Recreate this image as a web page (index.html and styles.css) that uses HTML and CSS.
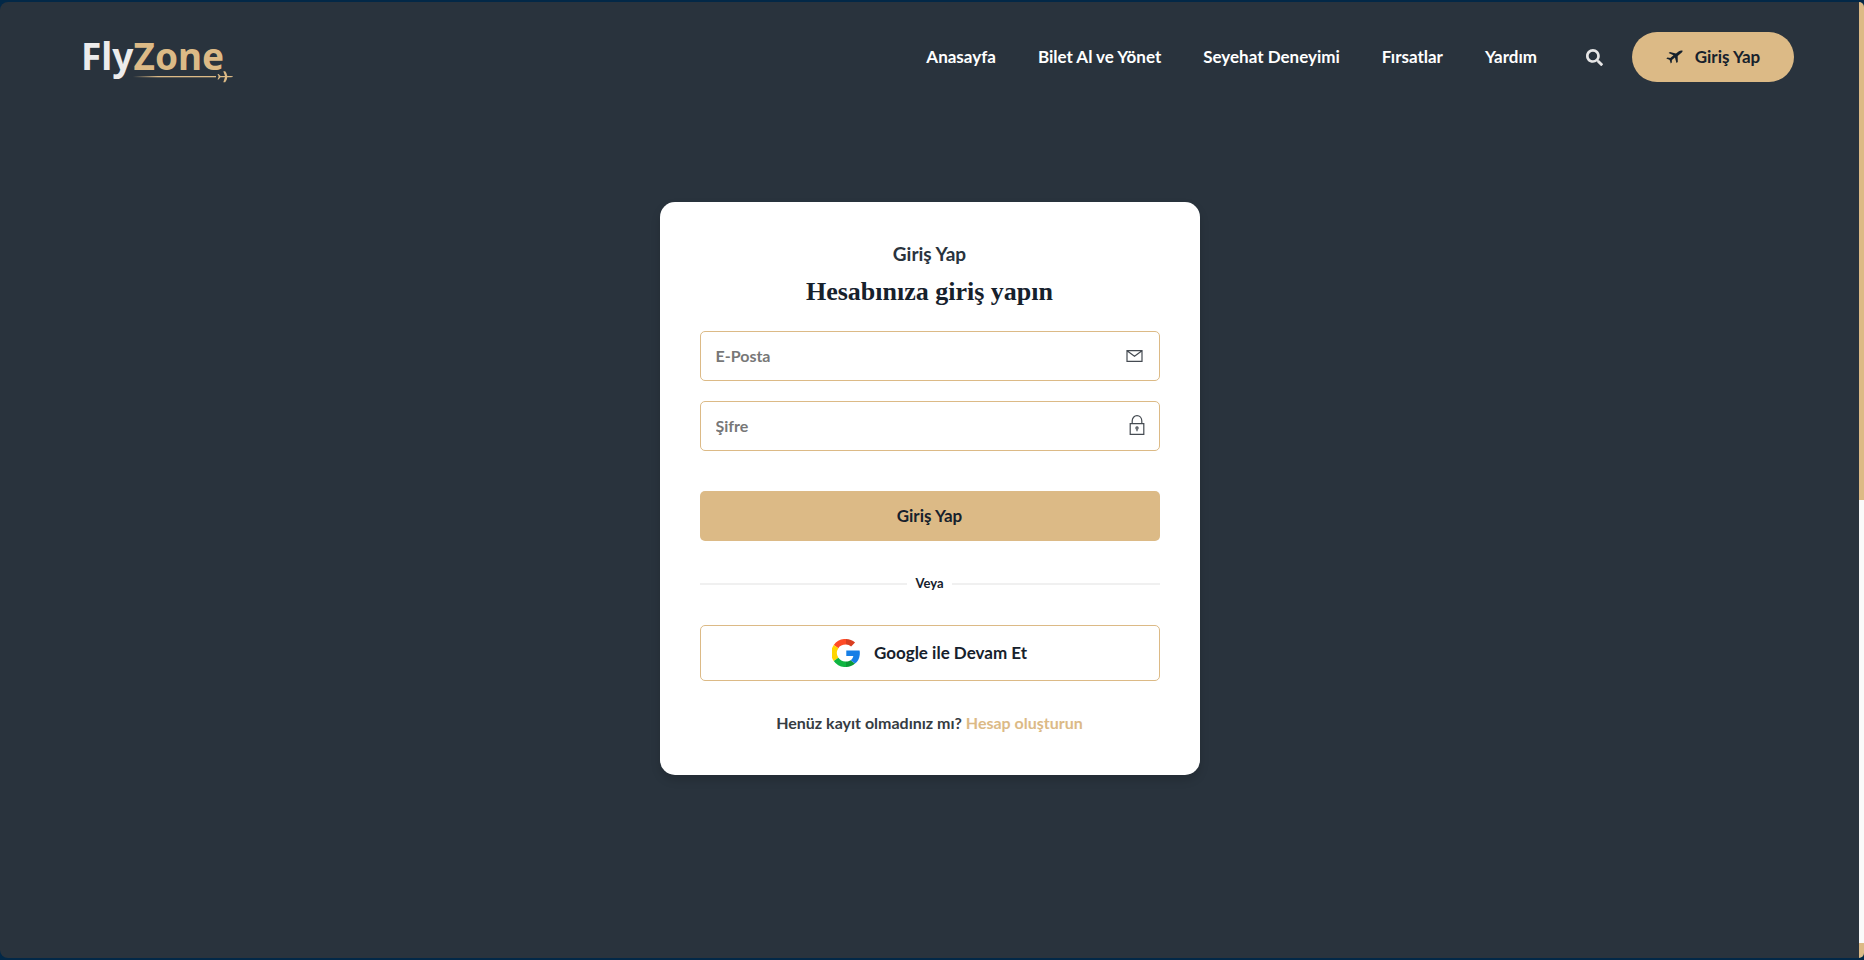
FILE: index.html
```html
<!DOCTYPE html>
<html lang="tr">
<head>
<meta charset="utf-8">
<title>FlyZone</title>
<link rel="stylesheet" href="styles.css">
</head>
<body>
<div class="window">
  <div class="page">
    <header class="header">
      <a class="logo" href="#" aria-label="FlyZone">
        <span class="logo-name"><span class="logo-fly">Fly</span><span class="logo-zone">Zone</span></span>
        <svg class="logo-trail" viewBox="0 0 102 14" aria-hidden="true">
          <defs><linearGradient id="trail"><stop offset="0" stop-color="#dcba86" stop-opacity="0"/><stop offset=".3" stop-color="#dcba86"/></linearGradient></defs>
          <rect x="2" y="6" width="83" height="1.300" fill="url(#trail)"/>
          <path d="M87.500 6.100 86.500 4H87.500L89.500 6.100H94L92.300 1.200H94.200Q96 3.200 96.300 6.100H100q2 .3 2 .6t-2 .6H96.300Q96 10.200 94.200 12.200H92.300L94 7.300H89.500L87.500 9.400H86.500L87.500 7.300z" fill="#dcba86"/>
        </svg>
      </a>
      <nav class="nav">
        <a href="#">Anasayfa</a>
        <a href="#">Bilet Al ve Yönet</a>
        <a href="#">Seyehat Deneyimi</a>
        <a href="#">Fırsatlar</a>
        <a href="#">Yardım</a>
      </nav>
      <button class="search" type="button" aria-label="Ara">
        <svg viewBox="0 0 512 512" width="17" height="17"><path fill="currentColor" d="M505 442.700 405.300 343c-4.500-4.500-10.600-7-17-7H372c27.600-35.300 44-79.700 44-128C416 93.100 322.900 0 208 0S0 93.100 0 208s93.100 208 208 208c48.300 0 92.700-16.400 128-44v16.300c0 6.400 2.500 12.500 7 17l99.700 99.700c9.400 9.400 24.600 9.400 33.900 0l28.300-28.300c9.400-9.400 9.400-24.600.1-34zM208 336c-70.700 0-128-57.200-128-128 0-70.700 57.200-128 128-128 70.700 0 128 57.200 128 128 0 70.700-57.200 128-128 128z"/></svg>
      </button>
      <a class="login-link" href="#">
        <svg viewBox="0 0 17 15" width="17" height="15" aria-hidden="true"><path fill="currentColor" d="M16.600.8c-1-.6-2.800-.1-4 .8L10 3.400 4 2 2.600 3l4.900 2.300L4.300 8 1.500 7.600.3 8.500l3 1.300.6.700.8 3 1.100-.9.100-2.700 3-2.400 1.600 5.600 1.300-1-.1-6.200 2.600-2.100C15.600 2.900 16.800 1.700 16.600.8z"/></svg>
        <span>Giriş Yap</span>
      </a>
    </header>
    <main class="main">
      <form class="card">
        <p class="eyebrow">Giriş Yap</p>
        <h1 class="title">Hesabınıza giriş yapın</h1>
        <label class="field">
          <input type="email" placeholder="E-Posta" aria-label="E-Posta">
          <svg class="mail" viewBox="0 0 17 12" width="17" height="12" aria-hidden="true"><path d="M1 .7h15v10.600H1zM1 .7l7.500 5.600L16 .7"/></svg>
        </label>
        <label class="field">
          <input type="password" placeholder="Şifre" aria-label="Şifre">
          <svg class="lock" viewBox="0 0 16 20" width="16" height="20" aria-hidden="true"><path d="M1.200 8.600h13.600v10.700H1.200zM3.200 8.600V6c0-3 2-5.300 4.800-5.300S12.800 3 12.800 6v2.600"/><circle cx="8" cy="13" r="1.100"/><path d="M8 14.300V16.300"/></svg>
        </label>
        <button class="submit" type="submit">Giriş Yap</button>
        <div class="divider"><span>Veya</span></div>
        <button class="google" type="button">
          <svg viewBox="0 0 48 48" width="28" height="28" aria-hidden="true">
            <path fill="#ff4b26" d="M10.900 15.800 3 10.200A24 24 0 0 1 24 0v9.600c-6 0-11 2.200-13.100 6.200z"/>
            <path fill="#d93f21" d="M24 0c6 0 11.400 2.300 15.500 6l-6.700 6.800A14 14 0 0 0 24 9.600z"/>
            <path fill="#ffd500" d="M3 10.200 10.900 15.800a15 15 0 0 0 0 16.400L3 37.800a25 25 0 0 1 0-27.600z"/>
            <path fill="#0fb541" d="M3 37.800 10.900 32.200A14.500 14.500 0 0 0 24 38.500V48A24 24 0 0 1 3 37.800z"/>
            <path fill="#0b9a36" d="M24 38.500c3 0 5.700-.8 7.900-2.200l7.600 5.900A23 23 0 0 1 24 48z"/>
            <path fill="#167ee6" d="M24.500 19.500h22.800c.5 2.600.6 4.500.3 7.300-.7 6.600-3.500 11.800-8.100 15.400l-7.600-5.900c2.500-1.700 4-4.200 4.700-7.300H24.500z"/>
          </svg>
          <span>Google ile Devam Et</span>
        </button>
        <p class="signup">Henüz kayıt olmadınız mı? <a href="#">Hesap oluşturun</a></p>
      </form>
    </main>
  </div>
  <div class="rail" aria-hidden="true"><span class="thumb"></span><span class="track"></span><span class="end"></span></div>
</div>
</body>
</html>
```
FILE: styles.css
```css
* { box-sizing: border-box; }

body {
  margin: 0;
  background: #022847;
  color: #16212c;
  font-family: Lato, "Noto Sans", sans-serif;
  font-size: 17px;
  line-height: 24px;
}

a { color: inherit; text-decoration: none; }
button, input { font: inherit; color: inherit; }
button { cursor: pointer; }
p, h1 { margin: 0; }

.window {
  display: flex;
  min-height: 100vh;
  border-top: 2px solid #022847;
  border-bottom: 2px solid #022847;
}

.page {
  flex: 1;
  display: flex;
  flex-direction: column;
  background: #29333d;
  border-radius: 8px 0 0 8px;
}

.rail {
  width: 5px;
  display: flex;
  flex-direction: column;
  border-radius: 0 8px 8px 0;
  overflow: hidden;
}
.thumb { flex: 498; background: #dcba86; }
.track { flex: 443; background: #fafafa; }
.end { flex: 15; background: #dcba86; }

.header {
  display: flex;
  align-items: center;
  padding: 28px 65px 0 81px;
}

.logo {
  display: flex;
  flex-direction: column;
  width: 152px;
  margin-right: auto;
  padding-top: 6px;
}
.logo-name {
  font: 700 37px/40px "Noto Sans", sans-serif;
}
.logo-fly { color: #ececec; }
.logo-zone { color: #dcba86; }
.logo-trail {
  align-self: flex-end;
  width: 102px;
  height: 14px;
  margin-top: -6px;
}

.nav {
  display: flex;
  gap: 42px;
  color: #fff;
  font-weight: 700;
}

.search {
  display: flex;
  margin: 0 29px 0 49px;
  padding: 0;
  border: 0;
  background: none;
  color: #e6e6e6;
}

.login-link {
  display: flex;
  align-items: center;
  justify-content: center;
  gap: 12px;
  min-width: 162px;
  height: 50px;
  border-radius: 25px;
  background: #dcba86;
  font-weight: 700;
}

.main {
  display: flex;
  justify-content: center;
  padding: 118px 20px 40px;
}

.card {
  width: 100%;
  max-width: 540px;
  padding: 40px;
  border-radius: 15px;
  background: #fff;
  box-shadow: 0 5px 10px rgba(0, 0, 0, .15);
  text-align: center;
}

.eyebrow {
  color: #29333d;
  font-size: 19px;
  font-weight: 700;
}

.title {
  margin: 8px 0 21px;
  font: 700 26px/36px "Liberation Serif", serif;
}

.field {
  display: flex;
  align-items: center;
  height: 50px;
  margin-bottom: 20px;
  padding: 0 16px 0 15px;
  border: 1px solid #dcba86;
  border-radius: 5px;
  color: #3c444c;
}
.field input {
  flex: 1;
  min-width: 0;
  padding: 0;
  border: 0;
  outline: 0;
  background: none;
  font-size: 16px;
  font-weight: 700;
}
.field input::placeholder { color: #777; opacity: 1; }
.field svg { fill: none; stroke: #454b52; stroke-width: 1.2; }
.field .lock { margin: 0 -2px 2px 0; }

.submit {
  width: 100%;
  height: 50px;
  margin-top: 20px;
  padding: 0;
  border: 0;
  border-radius: 5px;
  background: #dcba86;
  font-weight: 700;
}

.divider {
  display: flex;
  align-items: center;
  gap: 8px;
  margin: 30px 0 29px;
  font-size: 13px;
  font-weight: 700;
  line-height: 25px;
}
.divider::before,
.divider::after {
  content: "";
  flex: 1;
  height: 2px;
  background: #f0f0f0;
}

.google {
  display: flex;
  align-items: center;
  justify-content: center;
  gap: 14px;
  width: 100%;
  height: 56px;
  padding: 0;
  border: 1px solid #dcba86;
  border-radius: 5px;
  background: #fff;
  font-weight: 700;
}

.signup {
  margin-top: 30px;
  color: #363c42;
  font-size: 16px;
  font-weight: 700;
}
.signup a { color: #dcba86; }
```
